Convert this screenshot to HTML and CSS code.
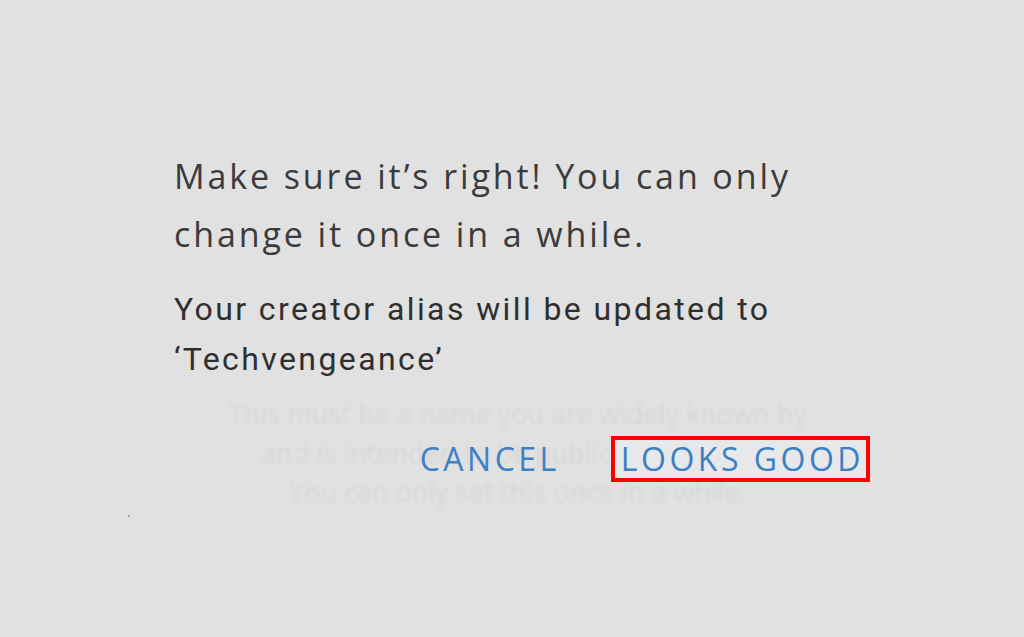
FILE: index.html
```html
<!DOCTYPE html>
<html lang="en">
<head>
<meta charset="utf-8">
<title>Creator alias</title>
<link rel="stylesheet" href="styles.css">
</head>
<body>
<div class="page">
  <div class="ghost" aria-hidden="true">
    <p class="ghost-line">This must be a name you are widely known by</p>
    <p class="ghost-line">and is intended to be public to everyone.</p>
    <p class="ghost-line">You can only set this once in a while.</p>
  </div>
  <span class="speck"></span>
  <div class="dialog">
    <h1 class="title">Make sure it’s right! You can only<br>change it once in a while.</h1>
    <p class="message">Your creator alias will be updated to<br>‘Techvengeance’</p>
    <div class="actions">
      <button class="btn btn-cancel">CANCEL</button>
      <button class="btn btn-ok">LOOKS GOOD</button>
    </div>
  </div>
</div>
</body>
</html>
```
FILE: styles.css
```css
html, body {
  margin: 0;
  padding: 0;
  background: #e1e1e1;
}
.page {
  position: relative;
  width: 1024px;
  height: 637px;
  overflow: hidden;
  background: #e1e1e1;
}
.ghost {
  padding-top: 394px;
  padding-left: 12px;
  text-align: center;
  font-family: "Open Sans", sans-serif;
  font-size: 27px;
  line-height: 39px;
  color: #d7d7d7;
  filter: blur(1.4px);
}
.ghost-line {
  margin: 0;
}
.speck {
  position: absolute;
  left: 128px;
  top: 515px;
  width: 2px;
  height: 2px;
  background: #8a8a8a;
  opacity: 0.7;
}
.dialog {
  position: absolute;
  inset: 0;
  padding: 147px 154px 0 174px;
  display: flex;
  flex-direction: column;
}
.title {
  margin: 0;
  font-family: "Open Sans", sans-serif;
  font-weight: 400;
  font-size: 34px;
  line-height: 58px;
  color: #3b3b3b;
  letter-spacing: 2.9px;
}
.message {
  margin: 21px 0 0;
  font-family: Roboto, sans-serif;
  font-size: 32px;
  line-height: 50px;
  color: #2f2f2f;
  letter-spacing: 2.4px;
}
.actions {
  margin-top: 52px;
  display: flex;
  justify-content: flex-end;
  align-items: center;
  gap: 45px;
}
.btn {
  font-family: "Open Sans", sans-serif;
  font-size: 32px;
  line-height: 38px;
  letter-spacing: 3.5px;
  color: #3d80c4;
  background: transparent;
  border: 4px solid transparent;
  padding: 0 2px 0 6px;
  margin: 0;
}
.btn-ok {
  border-color: #ff0000;
  background: #e6e8ea;
}
```
